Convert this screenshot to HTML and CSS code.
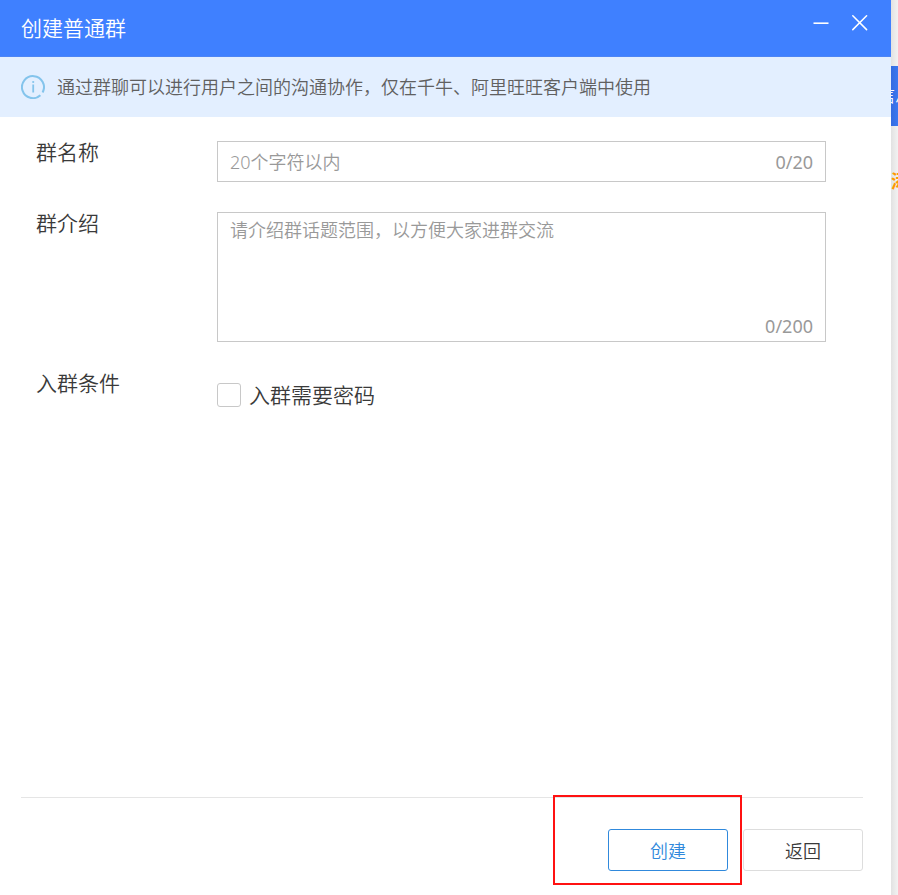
FILE: index.html
```html
<!DOCTYPE html>
<html lang="zh-CN">
<head>
<meta charset="utf-8">
<meta name="viewport" content="width=device-width, initial-scale=1">
<title>创建普通群</title>
<link rel="stylesheet" href="styles.css">
</head>
<body>
<main class="dialog">
  <header class="titlebar">
    <h1 class="title">创建普通群</h1>
    <div class="window-controls">
      <button class="window-button" type="button" aria-label="最小化">
        <svg viewBox="0 0 16 16" width="16" height="16"><path d="M0.5 8.2H15.5" fill="none" stroke="currentColor" stroke-width="1.6"/></svg>
      </button>
      <button class="window-button" type="button" aria-label="关闭">
        <svg viewBox="0 0 16 16" width="16" height="16"><path d="M0.8 0.8L14.6 14.6M14.6 0.8L0.8 14.6" fill="none" stroke="currentColor" stroke-width="1.5" stroke-linecap="round"/></svg>
      </button>
    </div>
  </header>
  <p class="notice">
    <svg class="notice-icon" viewBox="0 0 24 24" width="24" height="24" aria-hidden="true">
      <path d="M19.4 20.2A11 11 0 1 1 21.6 17.4" fill="none" stroke="currentColor" stroke-width="2"/>
      <path d="M12.2 9.5V17.5" fill="none" stroke="currentColor" stroke-width="1.8"/>
      <circle cx="12.2" cy="7" r="1.1" fill="currentColor"/>
    </svg>
    <span>通过群聊可以进行用户之间的沟通协作，仅在千牛、阿里旺旺客户端中使用</span>
  </p>
  <form class="form">
    <div class="fields">
      <label class="label" for="name">群名称</label>
      <div class="box">
        <input class="control" id="name" type="text" maxlength="20" placeholder="20个字符以内">
        <span class="count">0/20</span>
      </div>
      <label class="label" for="intro">群介绍</label>
      <div class="box box-tall">
        <textarea class="control area" id="intro" maxlength="200" placeholder="请介绍群话题范围，以方便大家进群交流"></textarea>
        <span class="count">0/200</span>
      </div>
      <span class="label">入群条件</span>
      <label class="check">
        <input class="tick" type="checkbox">
        <span>入群需要密码</span>
      </label>
    </div>
    <footer class="actions">
      <div class="marked">
        <button class="button primary" type="button">创建</button>
      </div>
      <button class="button" type="button">返回</button>
    </footer>
  </form>
</main>
<aside class="behind" aria-hidden="true">
  <div class="behind-tab">信息</div>
  <div class="behind-link">添</div>
</aside>
</body>
</html>
```
FILE: styles.css
```css
* {
  box-sizing: border-box;
}

body {
  margin: 0;
  min-height: 100vh;
  display: flex;
  background: #f5f5f5;
  color: #3a3a3a;
  font-family: "Noto Sans", "Noto Sans CJK SC", sans-serif;
  font-size: 18px;
  font-weight: 350;
  line-height: 24px;
}

button,
input,
textarea {
  font: inherit;
  color: inherit;
}

.dialog {
  flex: 1;
  min-width: 0;
  display: flex;
  flex-direction: column;
  background: #fff;
}

.titlebar {
  height: 57px;
  padding: 0 23px 0 21px;
  display: flex;
  justify-content: space-between;
  background: #3f80ff;
  border-bottom: 1px solid #4d85f5;
  color: #fff;
}

.title {
  margin: 0;
  font-size: 21px;
  font-weight: inherit;
  line-height: 56px;
}

.window-controls {
  display: flex;
  align-items: flex-start;
  gap: 23px;
  padding-top: 15px;
}

.window-button {
  width: 16px;
  height: 16px;
  padding: 0;
  border: 0;
  background: none;
  line-height: 0;
}

.window-button svg {
  display: block;
}

.notice {
  margin: 0;
  min-height: 60px;
  padding: 0 21px;
  display: flex;
  align-items: center;
  gap: 12px;
  background: #e3efff;
  color: #606060;
}

.notice-icon {
  flex: none;
  color: #84c4ec;
}

.form {
  flex: 1;
  display: flex;
  flex-direction: column;
  justify-content: space-between;
}

.fields {
  padding: 24px 65px 0 36px;
  display: grid;
  grid-template-columns: 181px 1fr;
  row-gap: 30px;
}

.label {
  font-size: 21px;
  line-height: 22px;
}

.box {
  height: 41px;
  padding: 0 12px;
  display: flex;
  align-items: center;
  border: 1px solid #c8c8c8;
}

.box-tall {
  height: 130px;
  padding: 5px 12px 3px;
  flex-direction: column;
  align-items: stretch;
}

.control {
  flex: 1;
  min-width: 0;
  padding: 0;
  border: 0;
  outline: 0;
  background: none;
}

.area {
  resize: none;
}

.control::placeholder {
  color: #999;
  opacity: 1;
}

.count {
  color: #999;
  font-size: 18px;
  font-weight: 400;
  text-align: right;
}

.check {
  padding-top: 11px;
  display: flex;
  align-items: center;
  gap: 8px;
  font-size: 21px;
}

.tick {
  appearance: none;
  width: 24px;
  height: 24px;
  margin: 0;
  border: 1px solid #c8c8c8;
  border-radius: 3px;
  background: #fff;
}

.actions {
  margin: 0 28px 0 21px;
  padding: 31px 0 24px;
  display: flex;
  justify-content: flex-end;
  gap: 15px;
  border-top: 1px solid #e5e5e5;
}

.button {
  width: 120px;
  height: 42px;
  padding: 2px 0 0;
  border: 1px solid #ddd;
  border-radius: 3px;
  background: #fff;
}

.primary {
  border-color: #3089dc;
  color: #3089dc;
}

.marked {
  position: relative;
}

.marked::after {
  content: "";
  position: absolute;
  inset: -34px -14px -14px -55px;
  border: 2px solid #f11;
  pointer-events: none;
}

.behind {
  width: 7px;
  padding-top: 66px;
  overflow: hidden;
  white-space: nowrap;
  background: linear-gradient(to right, #e2e2e2, #f2f2f2);
}

.behind-tab {
  height: 60px;
  background: linear-gradient(to right, #346be0, #3b78f0);
  color: #fff;
  line-height: 58px;
  text-indent: -14px;
}

.behind-link {
  margin-top: 43px;
  color: #f90;
  font-weight: 700;
}
```
